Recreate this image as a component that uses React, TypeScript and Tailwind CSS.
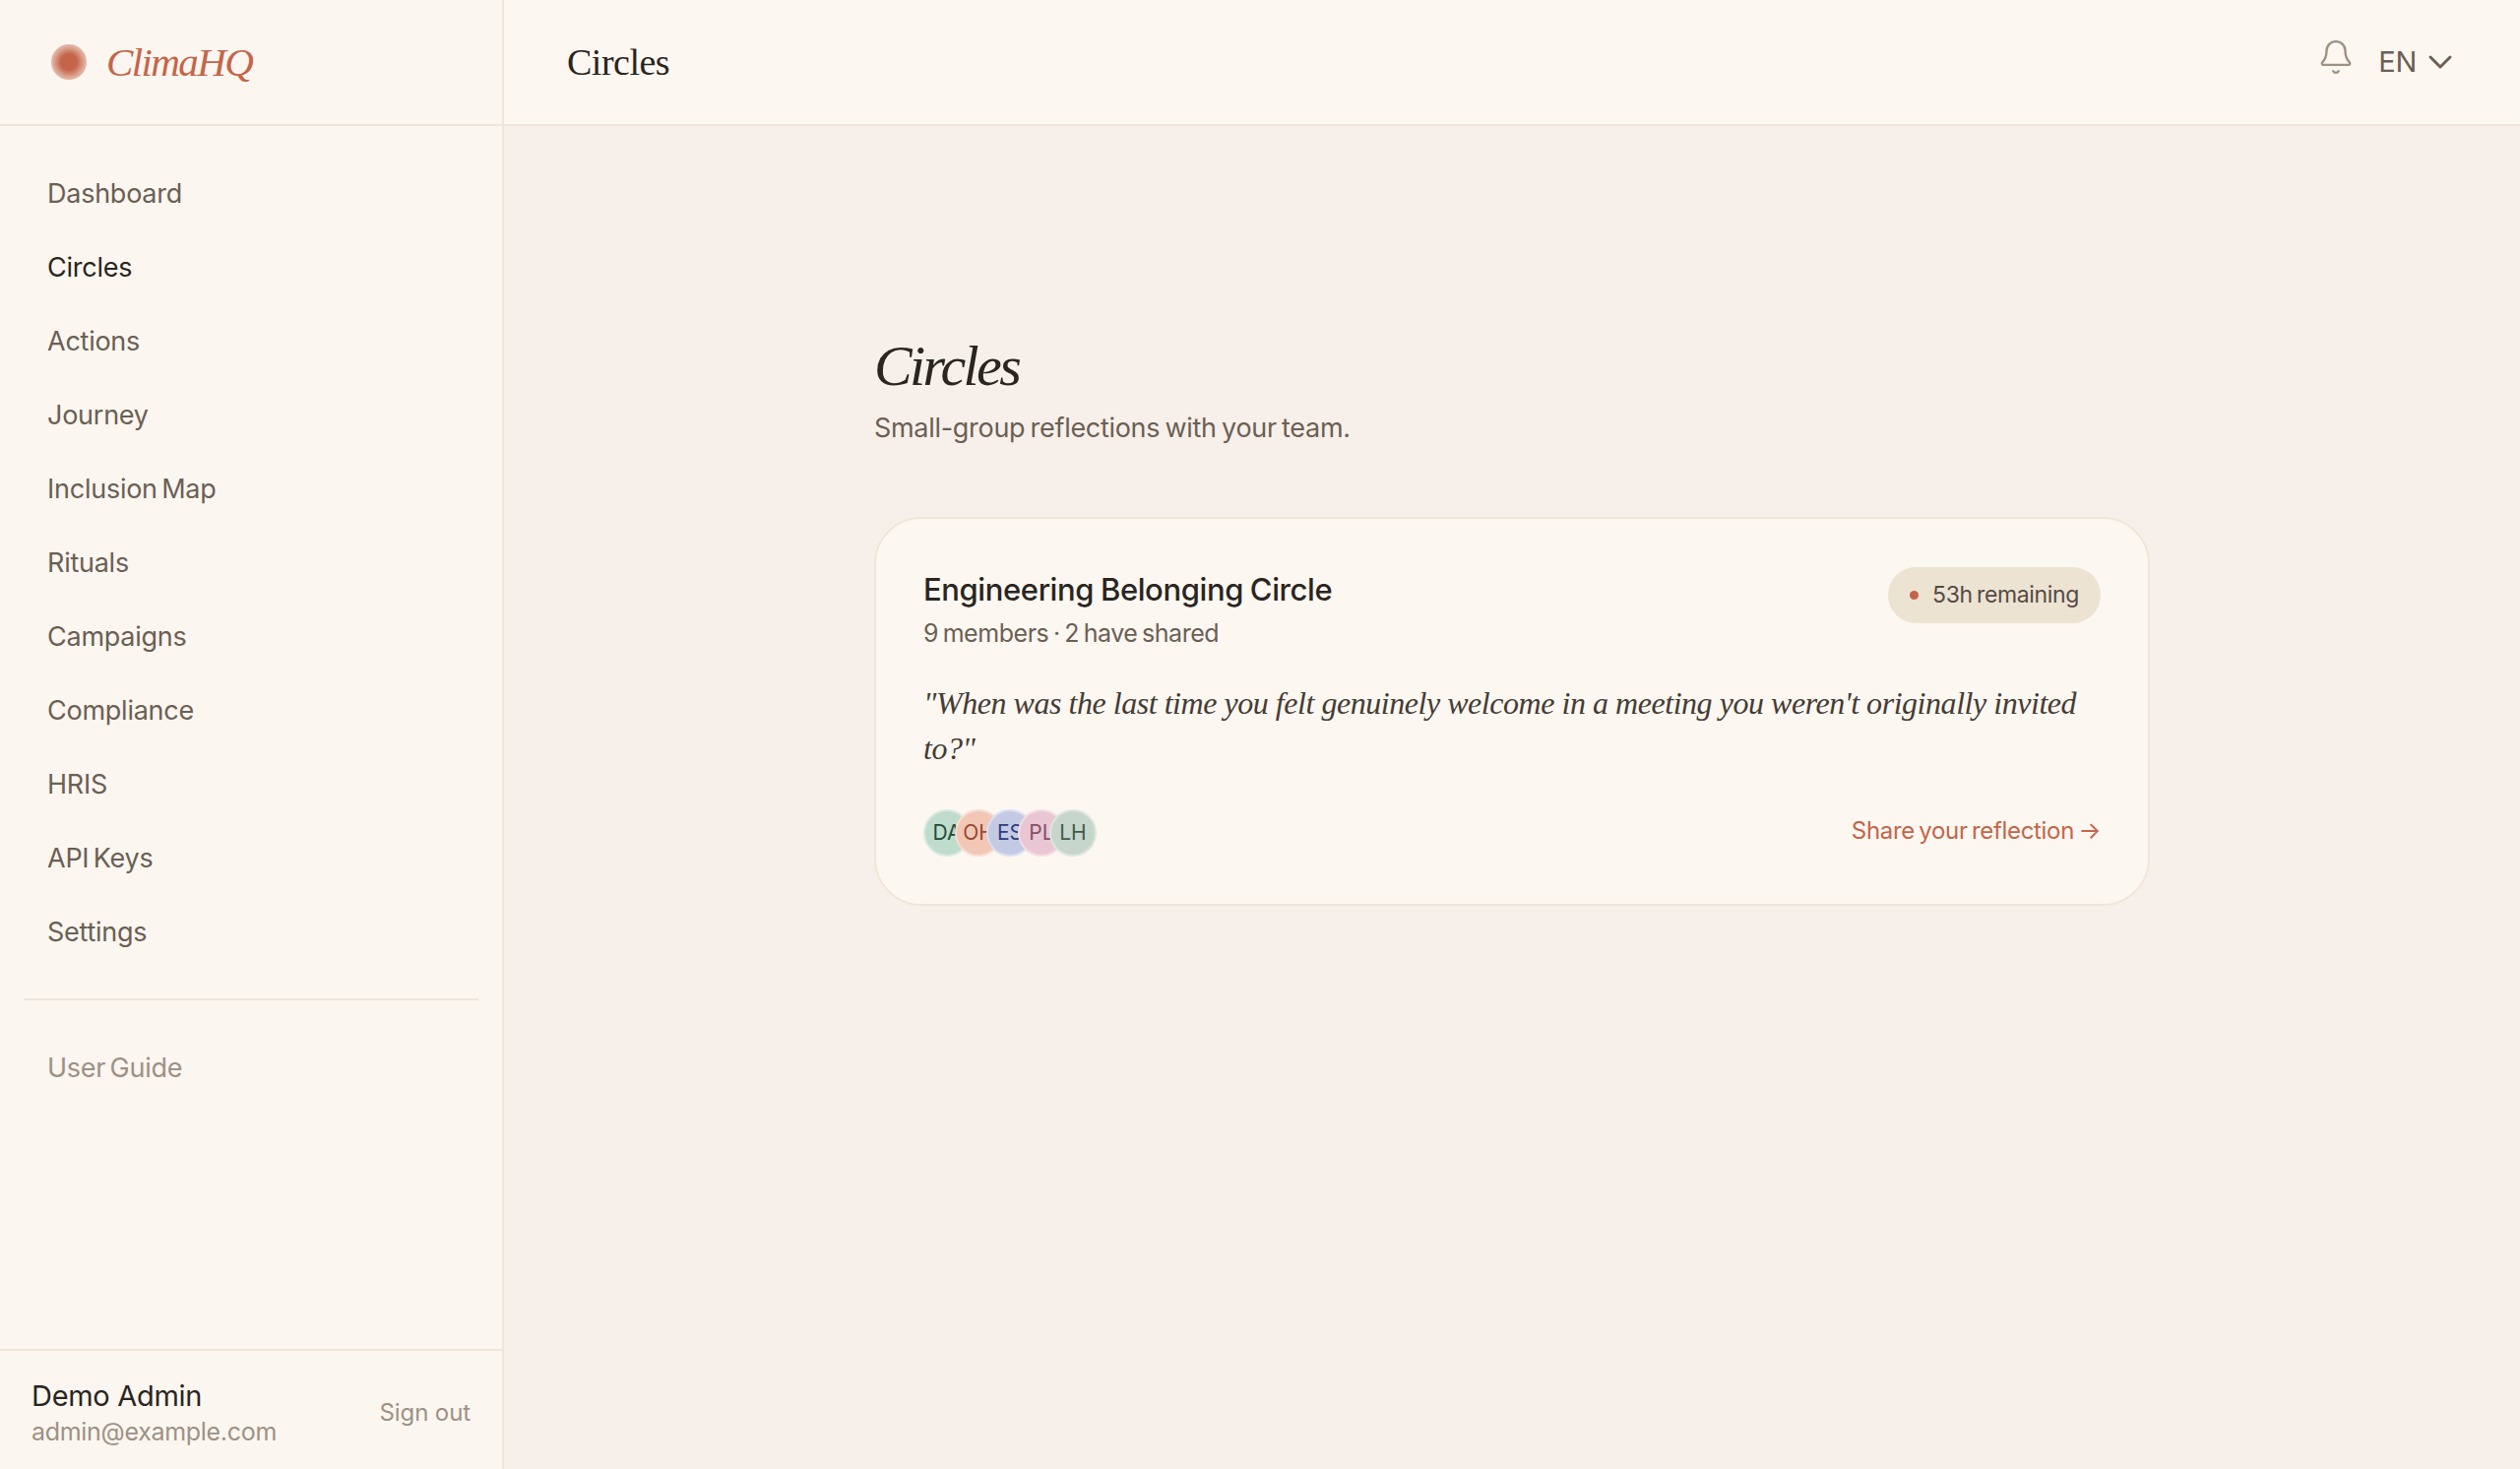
import React from "react";
import { Bell, ChevronDown } from "lucide-react";

const sans = "font-['Inter','Liberation_Sans',sans-serif]";
const serif = "font-['Liberation_Serif',serif]";

const nav = ["Dashboard", "Circles", "Actions", "Journey", "Inclusion Map", "Rituals", "Campaigns", "Compliance", "HRIS", "API Keys", "Settings"];

const avatars = [
  { t: "DA", bg: "bg-[#c0dccd]", fg: "text-[#1f4d3a]", z: "z-[1]" },
  { t: "OH", bg: "bg-[#f2c7b6]", fg: "text-[#964a30]", z: "z-[2]" },
  { t: "ES", bg: "bg-[#c4cae4]", fg: "text-[#2f3d80]", z: "z-[3]" },
  { t: "PL", bg: "bg-[#eac6d4]", fg: "text-[#84506a]", z: "z-[4]" },
  { t: "LH", bg: "bg-[#c6d6cb]", fg: "text-[#3e5c4c]", z: "z-[5]" },
];

export default function App() {
  return (
    <div className={`flex h-[1492px] w-[2560px] overflow-hidden bg-[#f7f0ea] ${sans}`}>
      <aside className="flex h-full w-[512px] shrink-0 flex-col border-r-2 border-[#efe6d9] bg-[#fbf6f0]">
        <div className="flex h-[128px] shrink-0 items-center gap-[20px] border-b-2 border-[#efe6d9] pl-[52px]">
          <span className="h-[36px] w-[36px] rounded-full bg-[radial-gradient(circle,#c4654a_0%,#c4654a_32%,rgba(196,101,74,0.55)_60%,rgba(196,101,74,0.08)_100%)]" />
          <span className={`${serif} text-[41px] italic leading-none tracking-[-1.6px] text-[#c4654a]`}>ClimaHQ</span>
        </div>
        <nav className="flex flex-col px-[48px] pt-[32px]">
          {nav.map((n) => (
            <div key={n} className={`flex h-[75px] items-center text-[27px] tracking-[-0.25px] [word-spacing:-3px] ${n === "Circles" ? "text-[#2a2521]" : "text-[#6b5f55]"}`}>
              {n}
            </div>
          ))}
        </nav>
        <div className="mx-[24px] mt-[29px] border-t-2 border-[#efe6d9]" />
        <div className="mt-[32px] flex h-[75px] items-center px-[48px] text-[27px] tracking-[-0.25px] [word-spacing:-3px] text-[#9d9185]">User Guide</div>
        <div className="mt-auto flex h-[122px] items-center justify-between border-t-2 border-[#efe6d9] px-[32px] pt-[5px]">
          <div className="flex flex-col">
            <span className="text-[29px] leading-[38px] tracking-[-0.3px] text-[#2a2521]">Demo Admin</span>
            <span className="text-[25px] leading-[34px] tracking-[-0.3px] text-[#9d9185]">admin@example.com</span>
          </div>
          <span className="text-[24px] tracking-[-0.1px] text-[#9d9185]">Sign out</span>
        </div>
      </aside>
      <div className="flex min-w-0 flex-1 flex-col">
        <header className="flex h-[128px] shrink-0 items-center justify-between border-b-2 border-[#efe6d9] bg-[#fcf7f1] pl-[64px] pr-[61px]">
          <h1 className={`${serif} text-[38px] tracking-[-0.5px] text-[#2a2521]`}>Circles</h1>
          <div className="flex items-center gap-[24px]">
            <Bell size={38} strokeWidth={1.5} className="-mt-[10px] text-[#9d9185]" />
            <div className="flex items-center gap-[4px] text-[29px] tracking-[-0.3px] text-[#6b5f55]">
              EN
              <ChevronDown size={40} strokeWidth={1.75} />
            </div>
          </div>
        </header>
        <main className="flex flex-1 justify-center pt-[208px]">
          <div className="w-[1296px]">
            <h2 className={`${serif} text-[58px] italic leading-[72px] tracking-[-2.6px] text-[#2a2521]`}>Circles</h2>
            <p className="mt-[9px] text-[27px] leading-[36px] tracking-[-0.3px] [word-spacing:-2px] text-[#6b5f55]">Small-group reflections with your team.</p>
            <section className="mt-[72px] h-[395px] rounded-[48px] border-2 border-[#efe6d9] bg-[#fcf7f1] px-[48px] pt-[48px]">
              <div className="flex items-start justify-between">
                <div className="pt-[4px]">
                  <h3 className="text-[31px] font-medium leading-[40px] tracking-[-0.4px] [word-spacing:-1px] text-[#2a2521]">Engineering Belonging Circle</h3>
                  <p className="mt-[6px] text-[25px] leading-[36px] tracking-[-0.45px] [word-spacing:-2px] text-[#6b5f55]">9 members · 2 have shared</p>
                </div>
                <div className="mt-[1px] flex h-[57px] items-center gap-[14px] rounded-full bg-[#ece3d3] px-[22px] text-[23px] tracking-[-0.35px] [word-spacing:-2px] text-[#544a42]">
                  <span className="h-[9px] w-[9px] rounded-full bg-[#c4654a]" />
                  53h remaining
                </div>
              </div>
              <p className={`${serif} mt-[30px] text-[32px] italic leading-[46px] tracking-[-0.46px] text-[#453c35]`}>
                "When was the last time you felt genuinely welcome in a meeting you weren't originally invited to?"
              </p>
              <div className="mt-[39px] flex items-center justify-between">
                <div className="flex">
                  {avatars.map((a, i) => (
                    <div key={a.t} className={`relative ${a.z} ${i ? "-ml-[16px]" : ""} flex h-[48px] w-[48px] items-center justify-center rounded-full border-2 border-white/40 ${a.bg} ${a.fg} text-[21px]`}>
                      {a.t}
                    </div>
                  ))}
                </div>
                <span className="-mt-[4px] text-[24px] tracking-[-0.33px] [word-spacing:-2px] text-[#c4654a]">Share your reflection →</span>
              </div>
            </section>
          </div>
        </main>
      </div>
    </div>
  );
}
